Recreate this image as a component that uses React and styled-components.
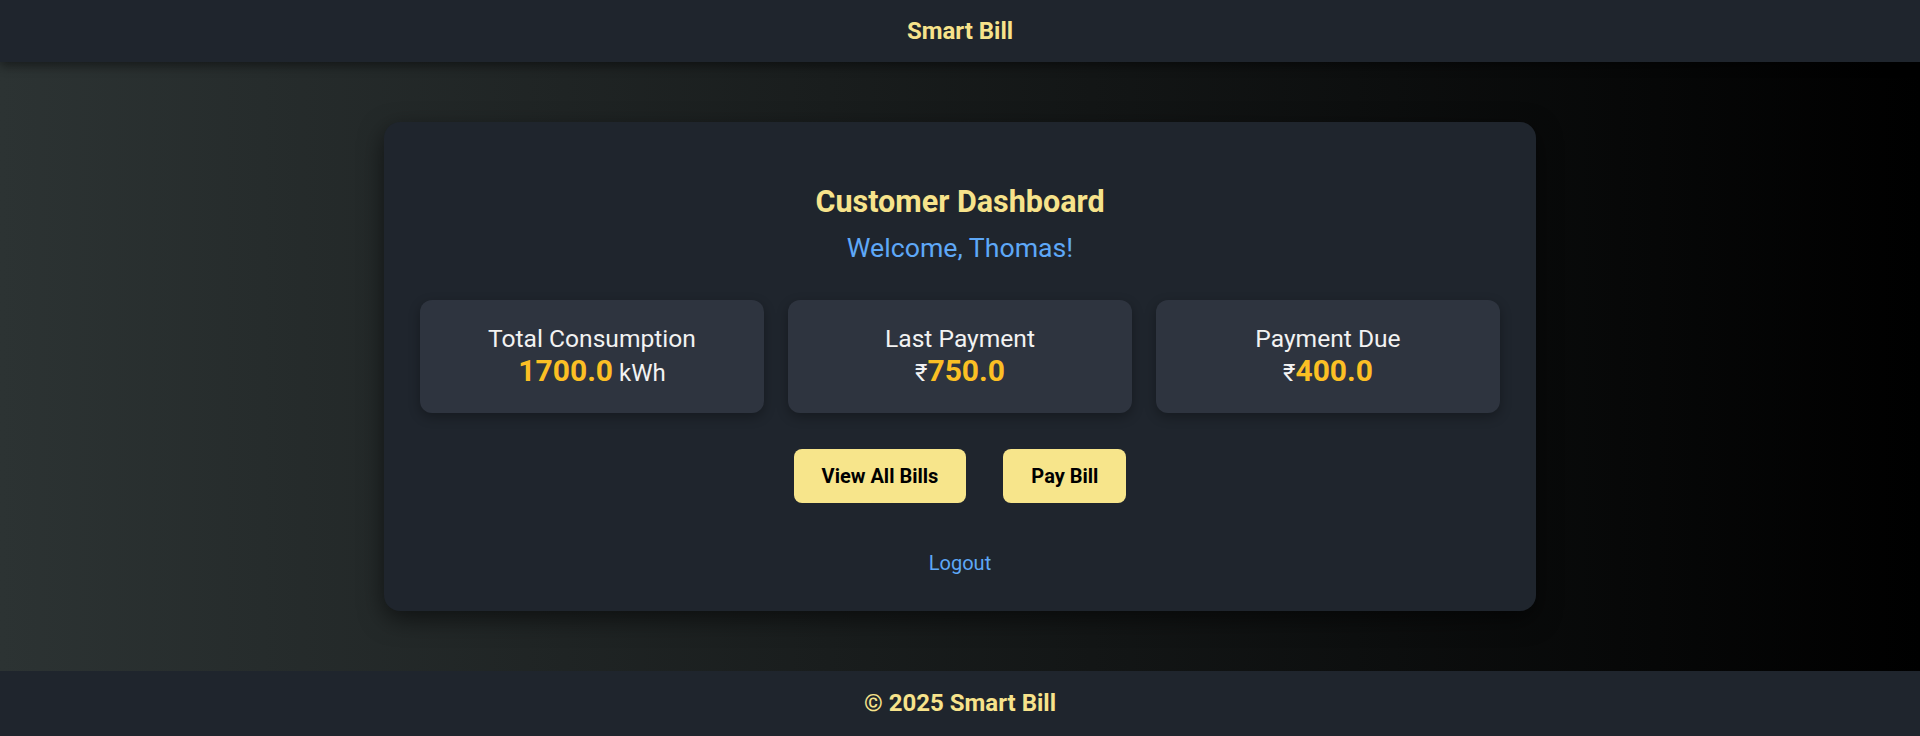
import React from "react";
import styled, { createGlobalStyle } from "styled-components";

const GlobalStyle = createGlobalStyle`
  * { box-sizing: border-box; }
  body {
    margin: 0;
    font-family: Roboto, "Noto Sans", "DejaVu Sans", sans-serif;
    background: #000;
  }
`;

const stats = [
  { label: "Total Consumption", value: "1700.0", unit: "kWh" },
  { label: "Last Payment", value: "750.0", prefix: "₹" },
  { label: "Payment Due", value: "400.0", prefix: "₹" },
];

export default function App() {
  return (
    <>
      <GlobalStyle />
      <Page>
        <Header>Smart Bill</Header>
        <Main>
          <Card>
            <Title>Customer Dashboard</Title>
            <Welcome>Welcome, Thomas!</Welcome>
            <StatsGrid>
              {stats.map((s) => (
                <StatCard key={s.label}>
                  <StatLabel>{s.label}</StatLabel>
                  <StatValue>
                    {s.prefix && <Currency>{s.prefix}</Currency>}
                    <strong>{s.value}</strong>
                    {s.unit && <Unit> {s.unit}</Unit>}
                  </StatValue>
                </StatCard>
              ))}
            </StatsGrid>
            <Actions>
              <ActionButton>View All Bills</ActionButton>
              <ActionButton>Pay Bill</ActionButton>
            </Actions>
            <Logout href="#">Logout</Logout>
          </Card>
        </Main>
        <Footer>© 2025 Smart Bill</Footer>
      </Page>
    </>
  );
}

const Page = styled.div`
  display: flex;
  flex-direction: column;
  height: 100vh;
  background: linear-gradient(to right, #2c3333, #000000);
`;

const Header = styled.header`
  position: relative;
  z-index: 1;
  flex: none;
  height: 62px;
  padding: 17px 0;
  text-align: center;
  background: #1f252d;
  color: #f7e38b;
  font-size: 24px;
  font-weight: 700;
  box-shadow: 0 4px 10px rgba(0, 0, 0, 0.45);
`;

const Main = styled.main`
  flex: 1;
  min-height: 0;
  padding: 60px 0;
`;

const Card = styled.section`
  width: 60%;
  margin: 0 auto;
  padding: 36px;
  background: #1f252d;
  border-radius: 16px;
  box-shadow: 0 8px 24px rgba(0, 0, 0, 0.55);
  text-align: center;
`;

const Title = styled.h2`
  margin: 26px 0 0;
  font-size: 30.5px;
  font-weight: 700;
  color: #f7e38b;
`;

const Welcome = styled.p`
  margin: 13px 0 0;
  font-size: 26.7px;
  color: #5ea8f7;
`;

const StatsGrid = styled.div`
  display: grid;
  grid-template-columns: repeat(3, 1fr);
  gap: 24px;
  margin-top: 36px;
`;

const StatCard = styled.div`
  padding: 24px 24px 25px;
  background: #2e343f;
  border-radius: 12px;
  box-shadow: 0 4px 12px rgba(0, 0, 0, 0.3);
`;

const StatLabel = styled.div`
  font-size: 24.6px;
  color: #f2f2f2;
`;

const StatValue = styled.div`
  font-size: 30px;
  color: #fbbf24;
  strong { font-weight: 700; }
`;

const Currency = styled.span`
  font-size: 24px;
  color: #f2f2f2;
`;

const Unit = styled.span`
  font-size: 24px;
  color: #f2f2f2;
`;

const Actions = styled.div`
  display: flex;
  justify-content: center;
  gap: 37px;
  margin-top: 36px;
`;

const ActionButton = styled.button`
  padding: 15px 28px;
  border: none;
  border-radius: 8px;
  background: #f7e58b;
  color: #000;
  font-family: inherit;
  font-size: 20px;
  font-weight: 700;
  cursor: pointer;
`;

const Logout = styled.a`
  display: inline-block;
  margin-top: 48px;
  font-size: 20px;
  color: #5ea8f7;
  text-decoration: none;
`;

const Footer = styled.footer`
  flex: none;
  height: 65px;
  padding: 18px 0 19px;
  text-align: center;
  background: #1f252d;
  color: #f7e38b;
  font-size: 24px;
  font-weight: 700;
`;
